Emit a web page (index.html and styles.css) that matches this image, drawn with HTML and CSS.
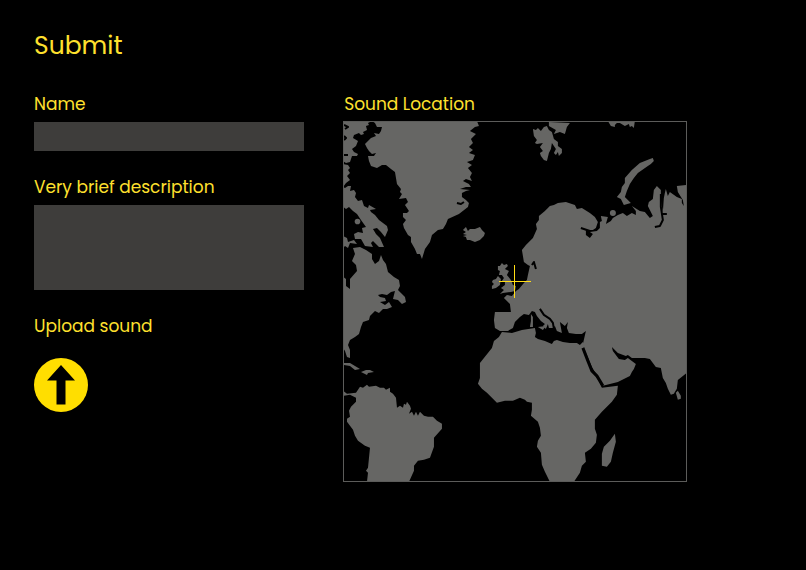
FILE: index.html
```
<!DOCTYPE html>
<html lang="en">
<head>
    <meta charset="UTF-8">
    <meta name="viewport" content="width=device-width, initial-scale=1.0">
    <title>Submit</title>
    <link rel="stylesheet" href="styles.css">
</head>
<body>
    <h1>Submit</h1>
    <form class="submit-form">
        <div class="fields">
            <div class="field">
                <label for="name">Name</label>
                <input type="text" id="name" name="name">
            </div>
            <div class="field">
                <label for="description">Very brief description</label>
                <textarea id="description" name="description"></textarea>
            </div>
            <div class="field upload">
                <label for="upload">Upload sound</label>
                <button type="button" id="upload" class="upload-button">
                    <svg viewBox="0 0 54 54" aria-hidden="true">
                        <path d="M27 7 L41 22.500 H31.500 V46.500 H22.500 V22.500 H13 Z"/>
                    </svg>
                </button>
            </div>
        </div>
        <div class="location">
            <h2>Sound Location</h2>
            <svg class="map" viewBox="344 122 342 359" role="img" aria-label="World map">
                <g class="land">
                    <!-- Arctic Canada -->
                    <path d="M343 121 H372 L368 123 369 125 366 126 367 130 363 132 364 134 361 135 359 133 354 135 353 138 358 141 356 146 352 149 354 152 358 154 357 156 352 156 350 162 346 163 343 161 Z"/>
                    <path d="M343 164 L348 165 350 168 348 170 350 173 347 176 350 180 346 183 343 187 Z"/>
                    <path d="M343 187 L345 188 348 186 351 186 350 191 354 190 356 193 355 197 358 201 362 200 364 206 368 208 369 205 376 209 370 210 371 212 375 215 379 220 387 226 388 230 385 237 381 232 377 228 373 229 376 234 380 238 384 247 379 247 373 241 371 243 373 247 365 246 361 239 355 239 354 234 358 232 363 233 362 228 366 227 361 220 357 214 353 211 349 207 346 209 343 207 Z"/>
                    <path d="M343 236 L347 238 348 242 354 240 357 244 350 243 348 248 345 246 343 248 Z"/>
                    <circle cx="357.500" cy="221.500" r="2.800"/>
                    <!-- North America -->
                    <path d="M353 248 L360 247 366 250 372 254 372 259 375 264 379 261 381 255 383 260 386 264 388 272 394 277 399 280 400 286 398 290 401 293 405 297 406 302 402 304 398 300 393 299 395 291 391 292 387 295 382 294 378 295 380 297 385 298 386 301 380 302 385 305 389 302 392 307 387 309 383 309 379 313 375 311 370 316 369 320 363 322 361 327 359 334 355 337 350 340 348 345 350 350 350 358 347 357 345 351 343 348 V277 L346 279 346 286 350 289 350 279 357 271 356 265 352 261 355 254 Z"/>
                    <path d="M343 363 L350 363 355 366 360 369 355 370 350 366 343 365 Z M361 372 L366 370 370 370 374 372 368 373 367 375 Z"/>
                    <!-- South America -->
                    <path d="M343 391 L347 394 356 393 358 390 360 387 363 388 367 385 369 387 376 386 380 388 384 388 386 390 390 388 390 392 393 394 396 398 397 408 400 406 403 408 404 404 406 405 407 402 410 406 411 409 409 414 412 412 414 416 416 412 418 416 420 412 424 416 428 417 433 417 437 421 442 424 442 429 434 438 434 447 430 458 424 460 418 461 414 466 414 471 409 482 H367 L368 473 366 471 368 468 370 448 365 446 358 441 355 436 353 430 347 422 347 419 350 417 349 411 351 407 356 402 356 398 350 395 343 396 Z"/>
                    <!-- Greenland -->
                    <path d="M372 121 L375 123 377 127 382 127 381 131 379 134 374 133 376 136 371 138 368 141 365 144 367 148 369 151 372 154 376 153 374 156 368 156 369 161 371 166 377 168 382 165 386 165 391 169 395 172 396 178 397 184 401 189 400 192 402 194 399 199 406 198 408 202 405 205 409 211 407 213 403 213 403 217 406 220 403 224 404 228 408 235 411 237 411 242 415 249 417 254 420 254 422 259 425 249 430 242 432 235 438 230 443 229 446 224 448 219 459 214 468 207 469 203 466 200 462 197 462 193 466 191 470 190 460 189 466 187 471 187 469 184 463 181 466 179 472 181 470 177 472 173 468 168 472 165 467 162 473 160 475 155 469 153 473 150 469 147 473 143 471 139 476 134 470 131 475 127 479 126 477 121 Z"/>
                    <path d="M463 230 L466 227 468 231 470 229 475 229 480 227 482 230 485 233 484 236 480 240 475 242 470 240 467 240 466 237 463 236 467 235 463 234 466 232 Z"/>
                    <!-- British Isles -->
                    <path d="M498 266 L500 266 502 263 504 265 507 264 508 266 505 269 509 271 507 275 511 280 513 285 516 286 515 291 511 292 503 293 500 294 504 290 501 288 505 285 505 282 502 281 504 278 502 275 499 275 500 271 498 270 Z M493 280 L496 279 498 276 501 279 500 285 496 288 492 289 492 286 494 284 492 282 Z"/>
                    <!-- Svalbard and Arctic islands -->
                    <path d="M533 129 L536 130 538 128 541 131 544 127 547 126 549 130 552 132 554 139 558 142 558 146 562 149 562 153 559 156 558 152 556 155 554 153 556 149 552 143 551 149 549 153 547 161 544 160 541 156 540 153 543 151 540 147 543 143 537 144 535 143 537 140 534 136 Z M549 122 L570 123 567 127 565 134 560 132 554 134 556 130 549 126 Z"/>
                    <path d="M608 121 H635 L634 128 632 126 630 127 629 124 625 126 620 123 617 123 615 125 615 127 611 126 Z"/>
                    <path d="M650 159 L653 158 654 161 651 164 648 166 638 173 634 178 630 184 627 191 625 197 628 200 631 203 624 205 621 199 617 197 621 192 622 187 625 183 625 178 632 170 640 163 Z"/>
                    <circle cx="613" cy="213" r="3"/>
                    <!-- Europe and Asia -->
                    <path d="M495 312 L511 312 510 304 504 298 507 295 512 296 516 291 519 289 524 283 527 280 528 275 530 266 528 265 524 262 523 256 522 250 526 245 533 238 537 229 536 224 539 220 539 216 545 211 550 206 554 205 558 203 566 202 575 205 577 209 582 208 590 213 595 217 598 222 596 228 593 230 586 230 586 235 590 238 593 234 590 232 597 231 600 228 600 222 602 221 601 216 608 217 606 224 611 221 613 218 618 215 623 213 627 216 632 213 636 215 636 211 632 206 640 211 645 212 650 218 653 216 648 206 649 202 653 199 654 190 657 186 661 190 661 200 663 212 664 198 665 193 666 189 668 196 670 192 677 197 682 199 682 203 684 206 683 200 678 192 677 186 687 185 V373 L678 380 677 389 674 394 671 395 668 389 666 383 663 378 661 368 656 367 650 359 645 358 632 358 628 355 626 356 618 353 612 347 613 351 619 359 625 360 628 358 632 361 636 364 634 369 632 372 630 376 618 382 603 386 598 377 592 367 585 350 583 344 586 331 582 334 576 334 569 333 567 328 568 322 565 326 560 322 562 333 557 331 555 326 553 328 549 328 548 324 546 329 543 326 545 324 541 321 537 316 535 312 532 311 529 315 524 314 520 317 515 322 513 328 508 331 500 331 495 328 494 320 Z"/>
                    <path d="M531 314 L533 317 533 327 530 327 531 321 Z M538 327 L546 326 543 330 Z M676 393 L678 391 681 396 681 399 678 400 Z"/>
                    <!-- Africa -->
                    <path d="M502 332 L512 333 522 330 535 328 536 333 535 337 538 339 545 341 552 344 554 341 557 340 563 342 570 343 577 343 580 345 583 342 585 347 588 359 593 373 598 379 602 388 610 387 618 386 617 395 612 402 602 412 595 420 595 429 597 435 596 443 591 449 585 453 586 462 582 466 580 473 574 482 H550 L545 472 542 465 541 453 537 447 538 441 541 436 540 428 538 422 531 416 532 410 532 403 527 402 525 400 520 398 513 401 505 401 497 403 487 393 482 389 478 384 480 378 480 363 484 358 492 348 494 341 499 337 Z"/>
                    <path d="M615 434 L616 442 613 453 611 462 607 467 602 466 602 454 604 447 610 441 Z"/>
                </g>
                <g class="water">
                    <path d="M344 125 L348 127 345 129 M344 136 L346 138 344 140 M344 155 L348 155"/>
                    <path d="M351 214 L347 218 349 224 346 230"/>
                    <path d="M655 227 L660 226 663 220 661 207 661 194 M663 214 L667 214"/>
                    <path d="M457 203 L461 204 464 202"/>
                    <path d="M532 265 L534 262 536 269 M581 228 L590 231"/>
                    <path d="M540 309 L544 315 550 319 553 323 554 329"/>
                    <path class="red-sea" d="M583 348 L588 361 592 371 597 376 603 386"/>
                </g>
                <path class="crosshair" d="M499 281.500 H531 M514.500 265 V298"/>
            </svg>
        </div>
    </form>
</body>
</html>
```
FILE: styles.css
```
* {
    box-sizing: border-box;
}
body {
    font-family: Poppins, Inter, sans-serif;
    background-color: #000;
    color: #ffe02e;
    margin: 0;
    padding: 28px 119px 28px 34px;
}
h1 {
    font-size: 25px;
    font-weight: 400;
    line-height: 36px;
    margin: 0 0 28px;
}
.submit-form {
    display: grid;
    grid-template-columns: 11fr 14fr;
    gap: 39px;
    align-items: start;
}
.fields {
    display: flex;
    flex-direction: column;
    gap: 24px;
}
.field {
    display: flex;
    flex-direction: column;
    gap: 6px;
}
label,
h2 {
    font-size: 17px;
    font-weight: 400;
    line-height: 24px;
    margin: 0;
}
input,
textarea {
    display: block;
    width: 100%;
    border: none;
    border-radius: 0;
    background-color: #3e3d3b;
    color: #ffe02e;
    font: inherit;
    padding: 4px 8px;
    resize: none;
}
input {
    height: 29px;
}
textarea {
    height: 85px;
}
.upload {
    gap: 20px;
    align-items: flex-start;
}
.upload-button {
    width: 54px;
    height: 54px;
    border: none;
    border-radius: 50%;
    background-color: #ffde00;
    padding: 0;
    cursor: pointer;
}
.upload-button svg {
    display: block;
    width: 100%;
}
.location {
    display: flex;
    flex-direction: column;
    gap: 5px;
}
.location h2 {
    padding-left: 1px;
}
.map {
    display: block;
    width: 100%;
    border: 1px solid #5c5c5a;
}
.land {
    fill: #666664;
}
.water {
    fill: none;
    stroke: #000;
    stroke-width: 2;
    stroke-linejoin: round;
}
.red-sea {
    stroke-width: 3;
}
.crosshair {
    fill: none;
    stroke: #ffdc14;
    stroke-width: 1;
    shape-rendering: crispEdges;
}
```
